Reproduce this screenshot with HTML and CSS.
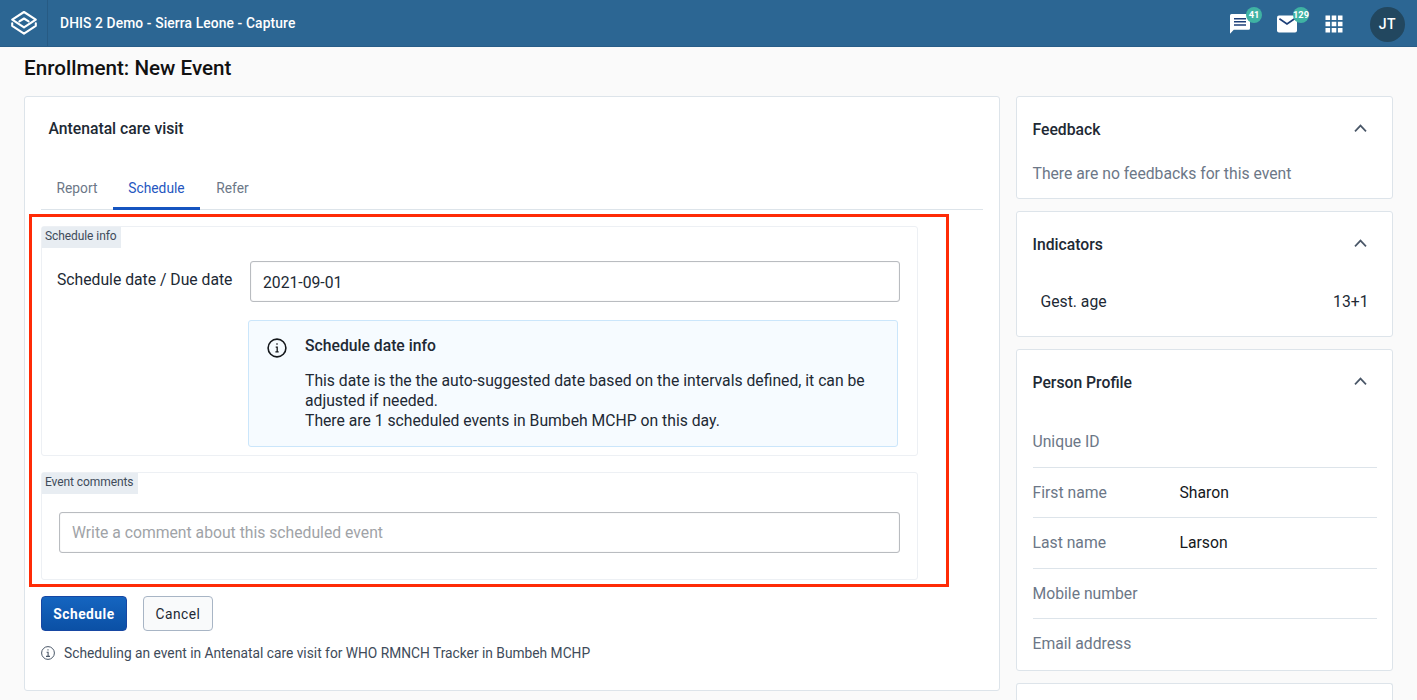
FILE: index.html
```html
<!DOCTYPE html>
<html lang="en">
<head>
<meta charset="utf-8">
<title>DHIS 2 Demo - Sierra Leone - Capture</title>
<link rel="stylesheet" href="styles.css">
</head>
<body>
<header class="headerbar">
  <div class="logo">
    <svg width="28" height="26" viewBox="0 0 28 26" fill="none" stroke="#fff" stroke-width="2.100" stroke-linejoin="round" stroke-linecap="round"><path d="M14 2 25.8 9.600 14 17.400 2.200 9.600Z"/><path d="M2.200 13.200V15.800L14 23.600 25.800 15.800V13.200"/><path d="M9.400 11.400 14 8.500 18.600 11.400"/></svg>
  </div>
  <div class="app-title"><span>DHIS 2 Demo - Sierra Leone - Capture</span></div>
  <div class="header-icons">
    <div class="header-icon">
      <svg width="22" height="22" viewBox="0 0 22 22"><path d="M2.500 1h17a1.500 1.500 0 0 1 1.500 1.500v12.800a1.500 1.500 0 0 1-1.500 1.500H4.800L1 20.800V2.500A1.500 1.500 0 0 1 2.500 1Z" fill="#fff"/><path d="M5 5.700h12M5 8.800h12M5 11.900h12" stroke="#1d3f78" stroke-width="1.500"/></svg>
      <span class="badge">41</span>
    </div>
    <div class="header-icon">
      <svg width="22" height="18" viewBox="0 0 22 18"><rect x="1" y=".5" width="20" height="17" rx="2" fill="#fff"/><path d="M3.400 3.800 11 8.900 18.600 3.800" fill="none" stroke="#1d3f78" stroke-width="1.700"/></svg>
      <span class="badge">129</span>
    </div>
    <div class="header-icon">
      <svg width="18" height="18" viewBox="0 0 18 18" fill="#fff"><path d="M.5.5h4.600v4.600H.5zM6.700.5h4.600v4.600H6.700zM12.900.5h4.600v4.600h-4.600zM.5 6.700h4.600v4.600H.5zM6.700 6.700h4.600v4.600H6.700zM12.900 6.700h4.600v4.600h-4.600zM.5 12.900h4.600v4.600H.5zM6.700 12.900h4.600v4.600H6.700zM12.900 12.900h4.600v4.600h-4.600z"/></svg>
    </div>
  </div>
  <div class="avatar">JT</div>
</header>
<h1 class="page-title"><span>Enrollment: New Event</span></h1>
<div class="columns">
  <main class="card main-card">
    <h2 class="stage-title"><span>Antenatal care visit</span></h2>
    <nav class="tabs">
      <div class="tab tab-report">Report</div>
      <div class="tab tab-active">Schedule</div>
      <div class="tab tab-refer">Refer</div>
    </nav>
    <div class="highlight"></div>
    <section class="section schedule-section">
      <div class="section-label">Schedule info</div>
      <div class="field-row">
        <label class="field-label">Schedule date / Due date</label>
        <div class="input date-input">2021-09-01</div>
      </div>
      <div class="notice">
        <svg class="notice-icon" width="20" height="20" viewBox="0 0 20 20" fill="none" stroke="#15181c"><circle cx="10" cy="10" r="8.900" stroke-width="1.600"/><path d="M10 5.300v1.500M8.700 9.100h1.500v4.300M8.400 13.900h3.300" stroke-width="1.300"/></svg>
        <div class="notice-body">
          <div class="notice-title"><span>Schedule date info</span></div>
          <p class="notice-text">This date is the the auto-suggested date based on the intervals defined, it can be<br>adjusted if needed.<br>There are 1 scheduled events in Bumbeh MCHP on this day.</p>
        </div>
      </div>
    </section>
    <section class="section comments-section">
      <div class="section-label comments-label">Event comments</div>
      <div class="input comment-input">Write a comment about this scheduled event</div>
    </section>
    <div class="actions">
      <div class="button primary">Schedule</div>
      <div class="button secondary">Cancel</div>
    </div>
    <div class="footnote">
      <svg width="14" height="14" viewBox="0 0 14 14" fill="none" stroke="#4a5768"><circle cx="7" cy="7" r="6.400"/><path d="M7 3.300v1.200M5.600 6.300h1.500v4M5 10.400h4" stroke-width="1.100"/></svg>
      <span>Scheduling an event in Antenatal care visit for WHO RMNCH Tracker in Bumbeh MCHP</span>
    </div>
  </main>
  <aside class="sidebar">
    <section class="card feedback">
      <div class="card-head"><h3>Feedback</h3><svg class="chevron" width="13" height="9" viewBox="0 0 13 9"><path d="M1 7.400 6.500 1.600 12 7.400"/></svg></div>
      <p class="empty-text">There are no feedbacks for this event</p>
    </section>
    <section class="card indicators">
      <div class="card-head"><h3>Indicators</h3><svg class="chevron" width="13" height="9" viewBox="0 0 13 9"><path d="M1 7.400 6.500 1.600 12 7.400"/></svg></div>
      <div class="indicator"><span>Gest. age</span><span class="indicator-value">13+1</span></div>
    </section>
    <section class="card profile">
      <div class="card-head"><h3>Person Profile</h3><svg class="chevron" width="13" height="9" viewBox="0 0 13 9"><path d="M1 7.400 6.500 1.600 12 7.400"/></svg></div>
      <dl class="profile-list">
        <div class="profile-row"><dt>Unique ID</dt><dd></dd></div>
        <div class="profile-row"><dt>First name</dt><dd>Sharon</dd></div>
        <div class="profile-row"><dt>Last name</dt><dd>Larson</dd></div>
        <div class="profile-row"><dt>Mobile number</dt><dd></dd></div>
        <div class="profile-row"><dt>Email address</dt><dd></dd></div>
      </dl>
    </section>
    <section class="card next-card"></section>
  </aside>
</div>
</body>
</html>
```

FILE: styles.css
```css
* { box-sizing: border-box; }
body { margin: 0; height: 700px; overflow: hidden; background: #fafafa; color: #212934; font-family: Roboto, "Liberation Sans", sans-serif; font-size: 15.73px; white-space: nowrap; }
h1, h2, h3, p, dl, dt, dd { margin: 0; font-weight: 400; }

.headerbar { display: flex; align-items: center; height: 47px; background: #2c6693; border-bottom: 1px solid #285d88; color: #fff; }
.logo { display: flex; align-items: center; justify-content: center; width: 48px; height: 46px; border-right: 1px solid #275b84; }
.app-title { flex: 1; padding-left: 12px; font-size: 13.8px; font-weight: 500; letter-spacing: .12px; }
.header-icons { display: flex; align-items: center; }
.header-icon { position: relative; display: flex; align-items: center; justify-content: center; width: 47px; height: 46px; padding-top: 2px; }
.badge { position: absolute; top: 7px; left: 30px; width: 16px; height: 16px; border-radius: 8px; background: #3fb3a3; font-size: 9.300px; font-weight: 700; line-height: 16px; text-align: center; }
.avatar { width: 35px; height: 35px; margin: 2px 12px 0 13px; border-radius: 50%; background: #22475f; font-size: 14px; font-weight: 500; line-height: 34px; letter-spacing: .6px; text-align: center; }

.page-title { height: 49px; padding-left: 24px; color: #111; font-size: 20.65px; font-weight: 500; line-height: 42px; }
.columns { display: grid; grid-template-columns: 976px 377px; gap: 16px; padding-left: 24px; align-items: start; }
.card { border: 1px solid #dde4ea; border-radius: 3px; background: #fff; }

.main-card { position: relative; height: 595px; padding: 0 16px; }
.stage-title { height: 72px; padding-left: 7.5px; font-size: 15.73px; font-weight: 500; line-height: 63px; }
.tabs { display: flex; height: 41px; border-bottom: 1px solid #dde4ea; color: #6c7787; font-size: 13.77px; line-height: 38px; text-align: center; }
.tab { height: 41px; }
.tab-report { width: 72px; }
.tab-active { width: 87px; border-bottom: 3px solid #1554c0; color: #2556c0; }
.tab-refer { width: 65px; }
.highlight { position: absolute; z-index: 1; top: 116.5px; left: 4px; width: 919.500px; height: 373px; border: 3px solid #ff2b06; }

.section { width: 877px; border: 1px solid #edf0f4; border-radius: 3px; }
.schedule-section { height: 230px; margin-top: 16px; }
.section-label { width: 79px; height: 21px; padding-left: 3px; background: #e8edf2; color: #404b5a; font-size: 12px; letter-spacing: -.08px; line-height: 19px; }
.field-row { display: flex; padding: 13px 0 0 15px; }
.field-label { width: 193px; line-height: 37px; }
.input { height: 41px; padding-left: 12px; border: 1px solid #b9bcc0; box-shadow: inset 0 0 1px #c9cbce; border-radius: 3px; line-height: 41px; }
.date-input { width: 650px; }
.notice { display: flex; width: 650px; height: 127px; margin: 18px 0 0 206px; padding-left: 18px; border: 1px solid #cbe6fb; border-radius: 3px; background: #f6fbff; }
.notice-icon { margin-top: 17px; }
.notice-body { padding-left: 18px; }
.notice-title { height: 50px; font-weight: 500; line-height: 49px; }
.notice-text { line-height: 20px; }

.comments-section { height: 108px; margin-top: 16px; }
.comments-label { width: 96px; }
.comment-input { width: 841px; margin: 18px 0 0 17px; color: #a0a3a7; line-height: 39px; }
.actions { display: flex; gap: 16px; margin-top: 16px; }
.button { height: 35px; border: 1px solid #a8b5c5; border-radius: 4px; font-size: 13.77px; line-height: 34px; letter-spacing: .5px; text-align: center; }
.primary { width: 86px; border-color: #1747a3; background: linear-gradient(#1565c0, #0b50a5); color: #fff; font-weight: 700; }
.secondary { width: 70px; background: #f9fafb; }
.footnote { display: flex; align-items: center; gap: 9px; height: 20px; margin-top: 12px; color: #404b5a; font-size: 13.77px; }

.sidebar { display: flex; flex-direction: column; }
.sidebar .card { padding: 0 15.5px; }
.card-head { display: flex; justify-content: space-between; align-items: center; height: 64px; padding-right: 9.5px; }
.card-head h3 { font-size: 15.73px; font-weight: 500; }
.chevron { margin-bottom: 2px; fill: none; stroke: #4a5768; stroke-width: 1.700; }
.feedback { height: 103px; margin-bottom: 12px; }
.empty-text { color: #6c7787; line-height: 25px; }
.indicators { height: 126px; margin-bottom: 12px; }
.indicator { display: flex; justify-content: space-between; padding: 16px 8px 0; line-height: 20px; }
.profile { height: 322px; margin-bottom: 12px; }
.profile-list { width: 344px; margin-top: 3px; }
.profile-row { display: grid; grid-template-columns: 147px 1fr; height: 50.500px; border-bottom: 1px solid #dde4ea; line-height: 50px; }
.profile-row:last-child { border-bottom: 0; }
.profile-row dt { color: #6c7787; }
.profile-row dd { color: #15181c; }
.sidebar .next-card { height: 17px; border-bottom: 0; border-radius: 3px 3px 0 0; }
```
